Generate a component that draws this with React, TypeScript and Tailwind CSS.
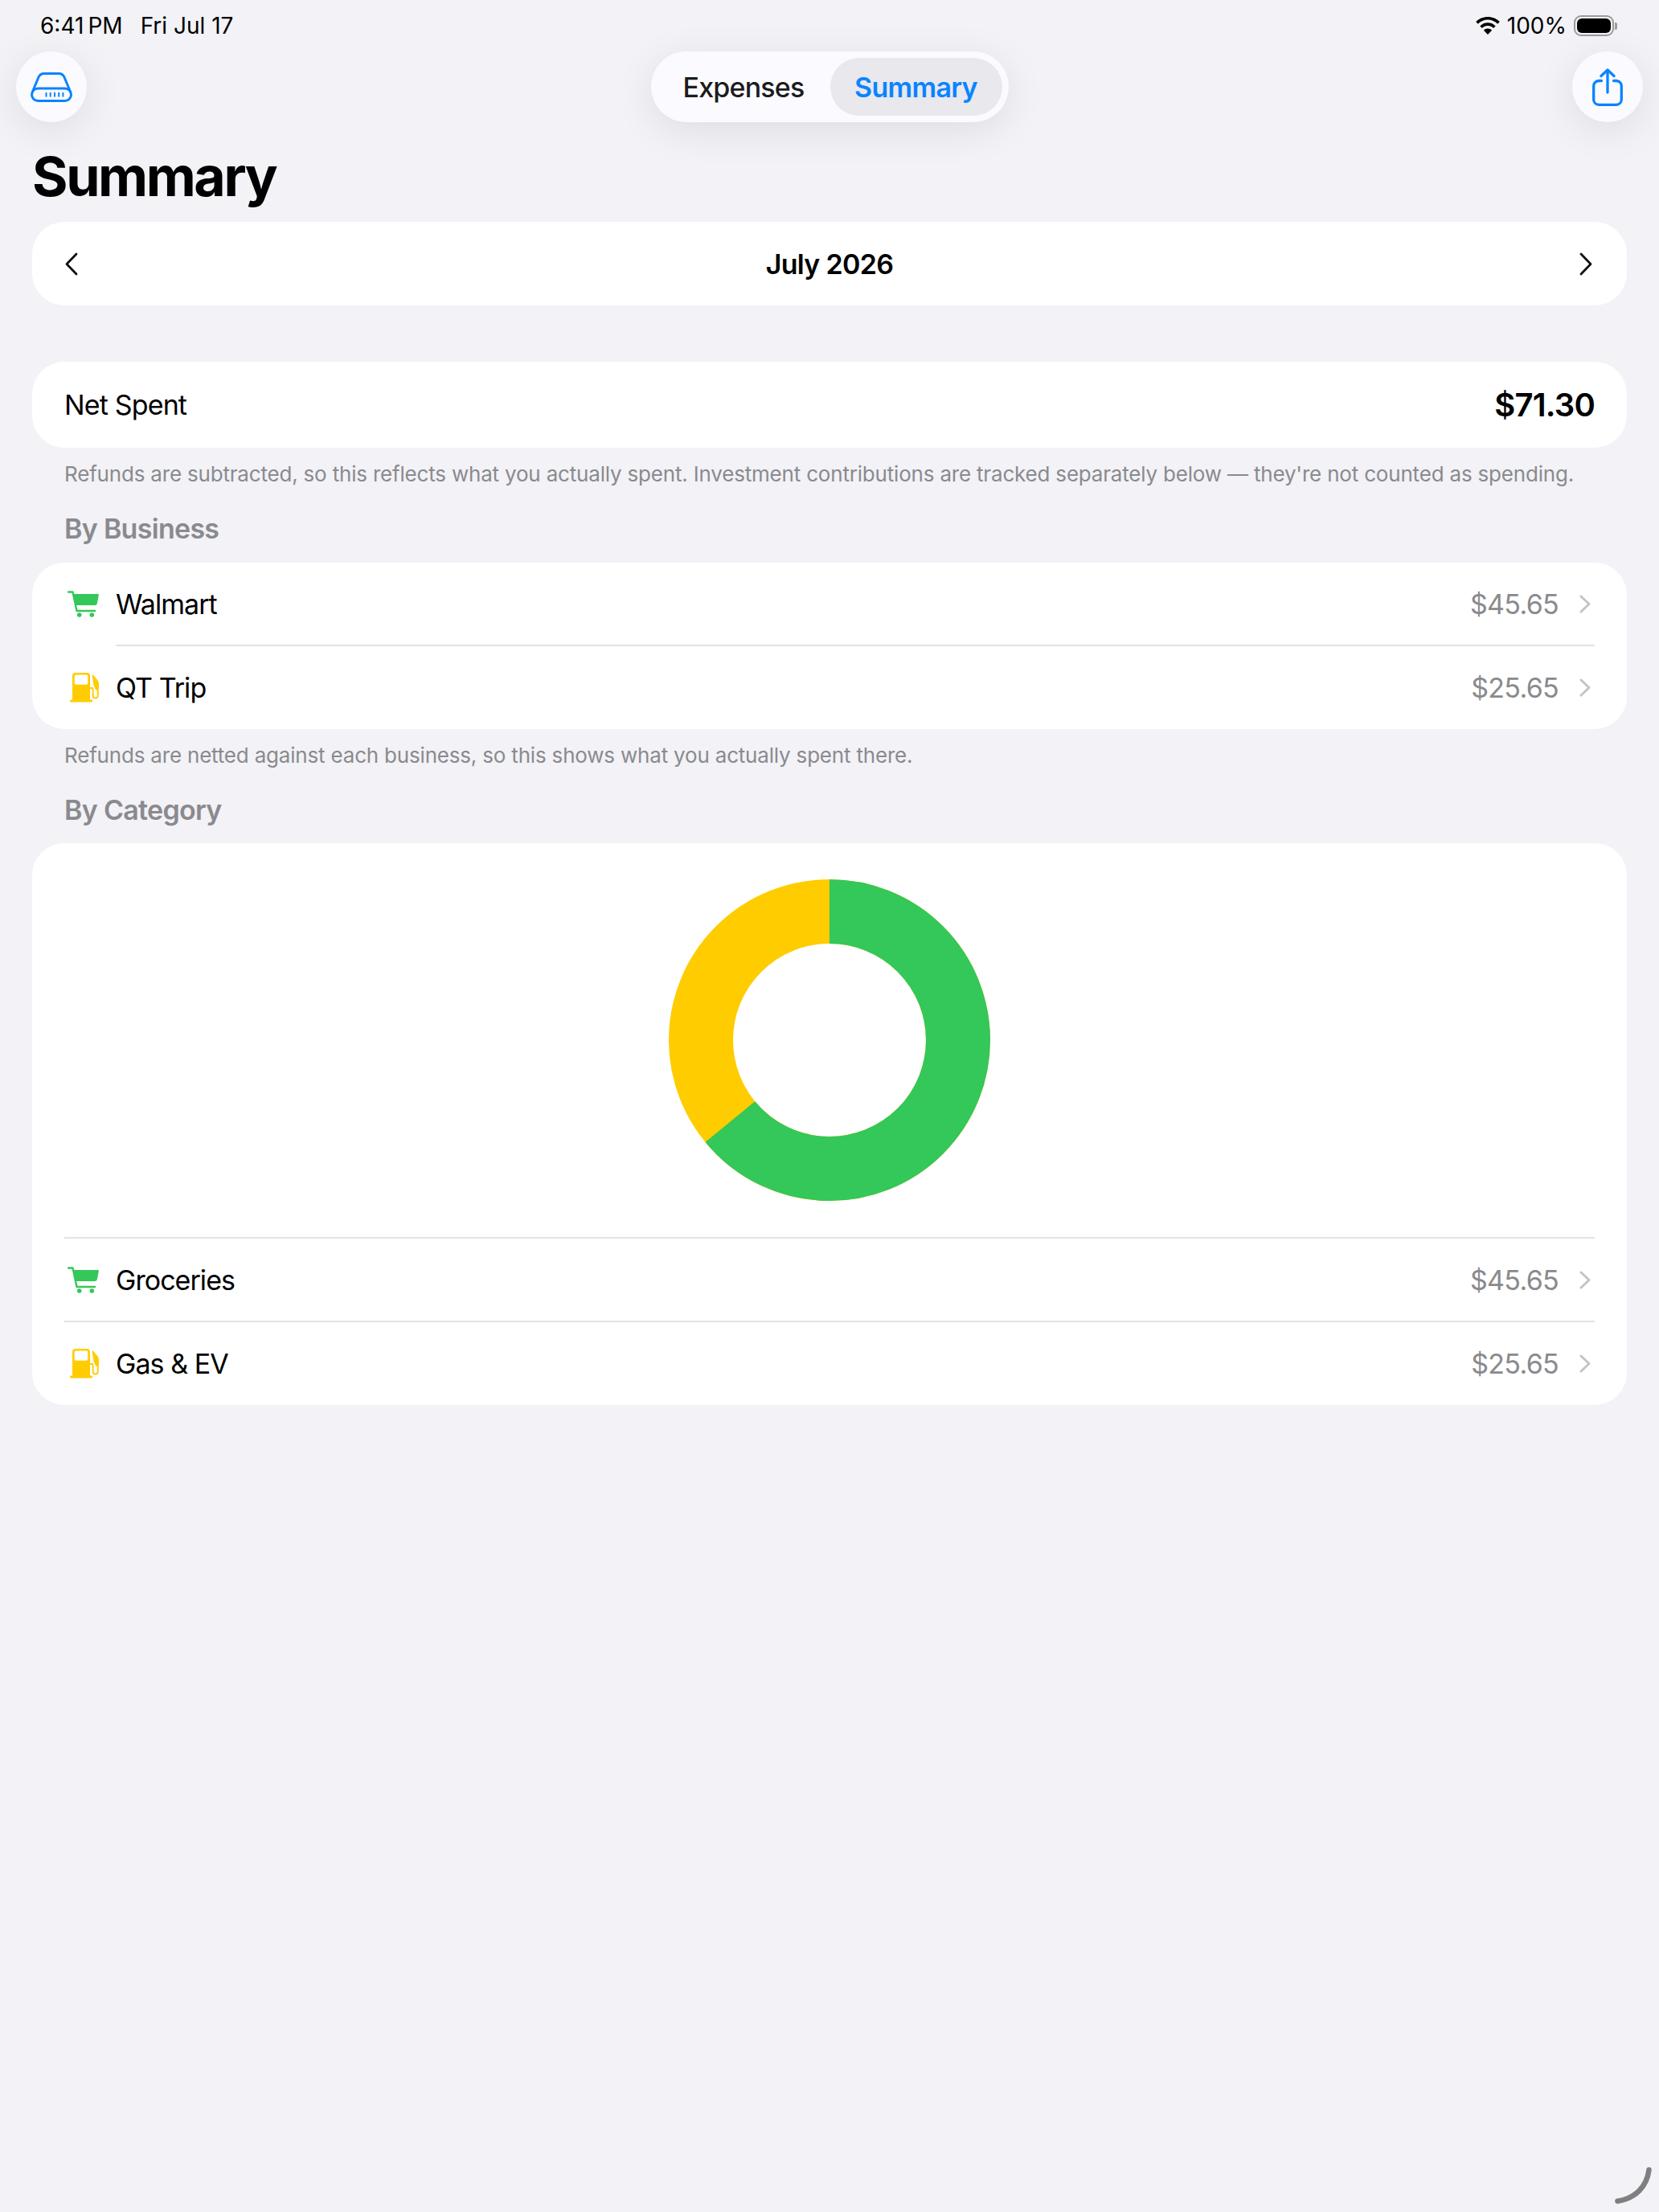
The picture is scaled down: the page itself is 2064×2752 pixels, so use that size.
import React from "react";

const Chevron = ({ dir, className, sw = 3.4 }: { dir: "left" | "right"; className: string; sw?: number }) => (
  <svg viewBox="0 0 16 29" className={className} fill="none" stroke="currentColor" strokeWidth={sw} strokeLinecap="round" strokeLinejoin="round">
    {dir === "left" ? <path d="M14 2 L2 14.5 L14 27" /> : <path d="M2 2 L14 14.5 L2 27" />}
  </svg>
);

const RowChevron = () => (
  <svg viewBox="0 0 14 23" className="ml-[26px] mr-[5px] h-[23px] w-[14px] text-[#c4c4c7]" fill="none" stroke="currentColor" strokeWidth="3" strokeLinecap="round" strokeLinejoin="round">
    <path d="M2 2 L12 11.5 L2 21" />
  </svg>
);

const DriveIcon = () => (
  <svg width="52" height="37" viewBox="0 0 52 37" fill="none" stroke="#0a84ff" strokeWidth="3" strokeLinecap="round">
    <rect x="1.5" y="20" width="49" height="15.5" rx="7.75" />
    <path d="M2.5 24 L10 6 Q12 1.5 17 1.5 H35 Q40 1.5 42 6 L49.5 24" />
    <path d="M19.5 25 V30.5 M24.7 25 V30.5 M30 25 V30.5 M35.2 25 V30.5 M40.4 25 V30.5" strokeWidth="2" strokeLinecap="butt" />
  </svg>
);

const ShareIcon = () => (
  <svg width="38" height="47" viewBox="0 0 38 47" fill="none" stroke="#0a84ff" strokeWidth="3.3" strokeLinecap="round" strokeLinejoin="round">
    <path d="M11.5 15.5 H8 A6.5 6.5 0 0 0 1.7 22 V39 A6.5 6.5 0 0 0 8 45.3 H30 A6.5 6.5 0 0 0 36.3 39 V22 A6.5 6.5 0 0 0 30 15.5 H26.5" />
    <path d="M19 2.5 V30" />
    <path d="M11 9.5 L19 2 L27 9.5" />
  </svg>
);

const CartIcon = () => (
  <svg width="40" height="33" viewBox="0 0 40 33" className="ml-[2px]">
    <path d="M1 1.5 H6.5 L11.5 25 H34" fill="none" stroke="#34c759" strokeWidth="2.4" strokeLinecap="round" strokeLinejoin="round" />
    <path d="M7.5 4 H38 Q39 4 38.8 5.2 L36.8 16 Q36.4 18 34 18 H10.5 Z" fill="#34c759" />
    <circle cx="14.7" cy="30" r="2.8" fill="#34c759" />
    <circle cx="30.3" cy="30" r="2.8" fill="#34c759" />
  </svg>
);

const FuelIcon = () => (
  <svg width="37" height="37" viewBox="0 0 37 37" className="ml-[4px]">
    <path fillRule="evenodd" d="M3 4 Q3 0 7 0 H21 Q25 0 25 4 V35 H3 Z M7.5 2.5 Q5.7 2.5 5.7 4.3 V13 Q5.7 14.8 7.5 14.8 H20.5 Q22.3 14.8 22.3 13 V4.3 Q22.3 2.5 20.5 2.5 Z" fill="#ffcc00" />
    <rect x="0" y="33.5" width="28" height="3" rx="1.2" fill="#ffcc00" />
    <path d="M25 19 H27.5 Q28.6 19 28.6 20.5 V28 Q28.6 31.5 31.6 31.5 Q34.8 31.5 34.8 28 V14 Q34.8 11 33 9" fill="none" stroke="#ffcc00" strokeWidth="1.9" strokeLinecap="round" />
    <path d="M27.5 3 L29 2.5 L34 9 Q36 12 36 15 V18.5 L33 22.5 Q29.5 17 29 13 Q28.5 8 27.5 3 Z" fill="#ffcc00" />
  </svg>
);

const Row = ({ icon, label, amount, last }: { icon: React.ReactNode; label: string; amount: string; last?: boolean }) => (
  <div className={"flex items-center " + (last ? "h-[103px]" : "h-[102px]")}>
    <div className="flex w-[46px] justify-center">{icon}</div>
    <span className="ml-[18px] flex-1 text-[34px] text-black tracking-[-0.95px]">{label}</span>
    <span className="text-[34px] text-[#8a8a8e] tracking-[-0.7px]">{amount}</span>
    <RowChevron />
  </div>
);

const Divider = ({ left }: { left: boolean }) => <div className={"h-[2px] bg-[#e3e3e6] " + (left ? "ml-[64px]" : "")} />;

const Footnote = ({ children }: { children: React.ReactNode }) => (
  <p className="mt-[15px] px-[80px] text-[26px] leading-[36px] text-[#8a8a8e] tracking-[-0.19px]">{children}</p>
);

const SectionTitle = ({ children, className }: { children: React.ReactNode; className: string }) => (
  <h2 className={"px-[80px] text-[34px] font-semibold leading-[40px] text-[#8a8a8e] tracking-[-0.7px] " + className}>{children}</h2>
);

export default function App() {
  return (
    <div className="relative h-[2752px] w-[2064px] overflow-hidden bg-[#f2f2f7] font-['Inter',sans-serif] text-black">
      <div className="flex h-[64px] items-center justify-between pl-[50px] pr-[52px] text-[28px]">
        <div className="flex gap-[22px]">
          <span>6:41{"\u2009"}PM</span>
          <span>Fri Jul 17</span>
        </div>
        <div className="flex items-center gap-[9px]">
          <svg width="30" height="22" viewBox="0 0 30 22" fill="#000">
            <path d="M15 0 C9.2 0 4 2.3 0.2 6.1 L2.8 8.8 C6 5.6 10.3 3.6 15 3.6 C19.7 3.6 24 5.6 27.2 8.8 L29.8 6.1 C26 2.3 20.8 0 15 0 Z" />
            <path d="M15 7.3 C11.2 7.3 7.8 8.9 5.3 11.4 L7.9 14 C9.7 12.2 12.2 11 15 11 C17.8 11 20.3 12.2 22.1 14 L24.7 11.4 C22.2 8.9 18.8 7.3 15 7.3 Z" />
            <path d="M15 14.6 C13 14.6 11.2 15.4 9.9 16.7 L15 22 L20.1 16.7 C18.8 15.4 17 14.6 15 14.6 Z" />
          </svg>
          <span>100%</span>
          <div className="flex items-center">
            <div className="h-[26px] w-[50px] rounded-[9px] border-2 border-[#9b9b9b] p-[2px]">
              <div className="h-full w-full rounded-[6px] bg-black" />
            </div>
            <div className="ml-[1px] h-[9px] w-[3px] rounded-r-[2px] bg-[#9b9b9b]" />
          </div>
        </div>
      </div>

      <div className="grid h-[88px] grid-cols-[1fr_auto_1fr] items-center px-[20px]">
        <button className="flex h-[88px] w-[88px] items-center justify-center justify-self-start rounded-full bg-[#fbfbff] shadow-[0_10px_50px_rgba(0,0,0,0.09)]">
          <DriveIcon />
        </button>
        <div className="flex h-[88px] w-[445px] items-center rounded-full bg-[#fbfbff] p-[8px] shadow-[0_10px_50px_rgba(0,0,0,0.09)]">
          <span className="flex-1 text-center text-[34px] font-medium text-[#1c1c1e] tracking-[-0.8px]">Expenses</span>
          <span className="flex h-[72px] w-[214px] items-center justify-center rounded-full bg-[#e8e8ed] text-[34px] font-semibold text-[#0a84ff] tracking-[-0.7px]">Summary</span>
        </div>
        <button className="flex h-[88px] w-[88px] items-center justify-center justify-self-end rounded-full bg-[#fbfbff] shadow-[0_10px_50px_rgba(0,0,0,0.09)]">
          <ShareIcon />
        </button>
      </div>

      <h1 className="flex h-[124px] items-center px-[40px] pt-[10px] text-[68px] font-bold tracking-[-2.4px]">Summary</h1>

      <div className="mx-[40px] flex h-[104px] items-center justify-between rounded-[40px] bg-white pl-[41px] pr-[43px]">
        <Chevron dir="left" sw={2.8} className="h-[29px] w-[16px] text-[#111]" />
        <span className="pl-[2px] text-[34px] font-semibold tracking-[-0.7px]">July 2026</span>
        <Chevron dir="right" sw={2.8} className="h-[29px] w-[16px] text-[#111]" />
      </div>

      <div className="mx-[40px] mt-[70px] flex h-[107px] items-center justify-between rounded-[40px] bg-white px-[40px]">
        <span className="text-[34px] tracking-[-0.85px]">Net Spent</span>
        <span className="text-[40px] font-semibold tracking-[-0.8px]">$71.30</span>
      </div>
      <Footnote>Refunds are subtracted, so this reflects what you actually spent. Investment contributions are tracked separately below — they're not counted as spending.</Footnote>
      <SectionTitle className="mt-[30px]">By Business</SectionTitle>

      <div className="mx-[40px] mt-[22px] rounded-[40px] bg-white px-[40px]">
        <Row icon={<CartIcon />} label="Walmart" amount="$45.65" />
        <Divider left />
        <Row icon={<FuelIcon />} label="QT Trip" amount="$25.65" last />
      </div>
      <Footnote>Refunds are netted against each business, so this shows what you actually spent there.</Footnote>
      <SectionTitle className="mt-[30px]">By Category</SectionTitle>

      <div className="mx-[40px] mt-[21px] rounded-[40px] bg-white px-[40px]">
        <div className="flex h-[490px] items-center justify-center">
          <svg width="400" height="400" viewBox="0 0 400 400" fill="none" strokeWidth="80">
            <circle cx="200" cy="200" r="160" stroke="#ffcc00" />
            <circle cx="200" cy="200" r="160" stroke="#34c759" strokeDasharray="643.7 1005.3" transform="rotate(-90 200 200)" />
          </svg>
        </div>
        <Divider left={false} />
        <Row icon={<CartIcon />} label="Groceries" amount="$45.65" />
        <Divider left={false} />
        <Row icon={<FuelIcon />} label="Gas & EV" amount="$25.65" last />
      </div>

      <svg className="absolute left-[2005px] top-[2693px]" width="52" height="52" viewBox="0 0 52 52" fill="none">
        <path d="M46.5 6.5 C44 27 30 42 7.5 45.5" stroke="#7f7f7f" strokeWidth="6.5" strokeLinecap="round" />
      </svg>
    </div>
  );
}
